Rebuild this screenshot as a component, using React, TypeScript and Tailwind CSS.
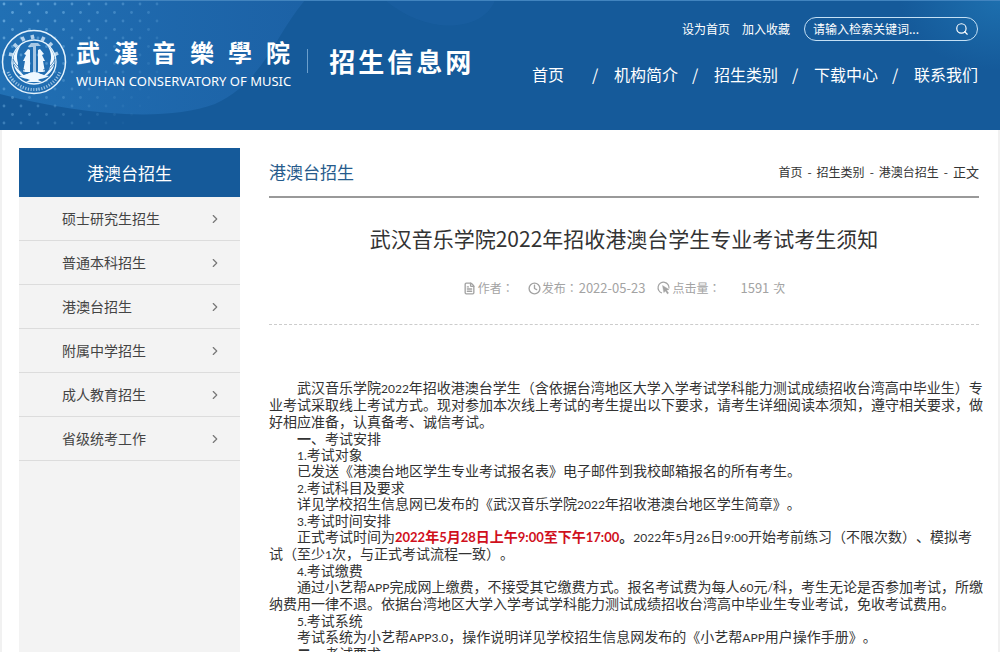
import { Fragment } from 'react';
import { ChevronRight, Clock, FileText, Search } from 'lucide-react';

const navItems = ['首页', '机构简介', '招生类别', '下载中心', '联系我们'];

const sideItems = [
  '硕士研究生招生',
  '普通本科招生',
  '港澳台招生',
  '附属中学招生',
  '成人教育招生',
  '省级统考工作',
];

// Latin letters and digits are set in a narrower face than the Chinese text
function Mixed({ children }: { children: string }) {
  return (
    <>
      {children.split(/([A-Za-z0-9.:/]+)/).map((part, i) =>
        i % 2 ? (
          <span key={i} className="font-['Lato',sans-serif] text-[12px] leading-none">
            {part}
          </span>
        ) : (
          <Fragment key={i}>{part}</Fragment>
        )
      )}
    </>
  );
}

function Heading({ children }: { children: string }) {
  return (
    <h3 className="indent-7 leading-4">
      <Mixed>{children}</Mixed>
    </h3>
  );
}

function Emblem() {
  return (
    <svg viewBox="0 0 66 66" className="h-[66px] w-[66px] shrink-0" fill="none" stroke="#e4f3fd" aria-hidden="true">
      <circle cx="33" cy="33" r="31.5" strokeWidth="1.5" />
      <path d="M7 43a28 28 0 0 0 52 0" strokeWidth="3" strokeDasharray="1.2 1.5" opacity="0.6" />
      <path d="M8 25l4 1M13 15l3 3M21 8l2 4M31 6l1 4M43 8l-2 4M51 14l-3 3M57 24l-4 2" strokeWidth="3.5" opacity="0.75" />
      <circle cx="33" cy="33" r="22" strokeWidth="1.3" />
      <g fill="#eef8ff" stroke="none">
        <path d="M20 16C8 25 10 46 27 49c-7-4-11-9-10-15-2-6-1-12 3-18Z" />
        <path d="M46 16c12 9 10 30-7 33 7-4 11-9 10-15 2-6 1-12-3-18Z" />
        <path d="M27 20l-4 5 2 1-3 6h2l-2 11h7V21Z" />
        <path d="M39 20l4 5-2 1 3 6h-2l2 11h-7V21Z" />
        <path d="M30 14h7l3 3h-5v29h-3V18h-5Z" opacity="0.65" />
        <path d="M18 47c8-1 10-4 15-4s7 3 15 4c-4 3-9 2-11 4l4 2H25l4-2c-3-2-7-1-11-4Z" />
      </g>
      <path d="M13 35c4 6 8 8 14 9M12 30c3 6 6 9 12 11M53 35c-4 6-8 8-14 9M54 30c-3 6-6 9-12 11" stroke="#286eaf" strokeWidth="0.8" />
    </svg>
  );
}

function ClickIcon() {
  return (
    <svg viewBox="0 0 14 14" className="h-[14px] w-[14px]" fill="none" stroke="currentColor" strokeWidth="1.2" aria-hidden="true">
      <path d="M5 12A5.5 5.5 0 1 1 12 7.5" />
      <path d="M5.5 4.5l6.5 4-2.4.7 2 2.9-1.2.8-1.9-2.9-1.7 1.6Z" fill="currentColor" strokeWidth="0.4" />
    </svg>
  );
}

function HeaderBackdrop() {
  return (
    <svg
      className="absolute inset-0 h-full w-full"
      viewBox="0 0 1000 130"
      preserveAspectRatio="xMinYMin slice"
      aria-hidden="true"
    >
      <defs>
        <pattern id="dots" width="17" height="17" patternUnits="userSpaceOnUse">
          <circle cx="4" cy="4" r="1.4" fill="#6fb0e2" />
          <circle cx="12.5" cy="12.5" r="1.4" fill="#6fb0e2" />
        </pattern>
        <linearGradient id="left" x1="0" x2="1" y1="0" y2="0">
          <stop offset="0" stopColor="#2170b4" />
          <stop offset="1" stopColor="#1f65ab" stopOpacity="0.7" />
        </linearGradient>
        <linearGradient id="fade" x1="0" x2="1" y1="0" y2="0.8">
          <stop offset="0" stopColor="#fff" stopOpacity="0.8" />
          <stop offset="1" stopColor="#fff" stopOpacity="0" />
        </linearGradient>
        <radialGradient id="corner" cx="1" cy="0" r="1">
          <stop offset="0" stopColor="#1d6fae" />
          <stop offset="1" stopColor="#1d6fae" stopOpacity="0" />
        </radialGradient>
        <mask id="dotsMask">
          <rect width="160" height="130" fill="url(#fade)" />
        </mask>
      </defs>
      <path d="M0 0H305C275 35 265 80 215 104C160 124 70 112 0 94Z" fill="url(#left)" />
      <path d="M385 0h110c-12 32-68 36-110 0Z" fill="#1f65a8" opacity="0.35" />
      <rect width="160" height="130" fill="url(#dots)" mask="url(#dotsMask)" />
      <rect x="900" width="100" height="70" fill="url(#corner)" />
      <rect width="1000" height="1" fill="#4184bf" />
    </svg>
  );
}

function Header() {
  return (
    <header className="relative h-[130px] shrink-0 bg-[#155a9a] text-white">
      <HeaderBackdrop />
      <div className="relative flex justify-between pr-[22px]">
        <a href="#" className="flex items-start pl-px pt-[29px]">
          <Emblem />
          <div className="ml-[9px] mt-[7px]">
            <div className="flex gap-[14px] text-[24px] font-bold leading-[32px]">
              {[...'武漢音樂學院'].map((c) => (
                <span key={c}>{c}</span>
              ))}
            </div>
            <div className="font-['Noto_Sans',sans-serif] text-[13px] leading-[26px]">
              WUHAN CONSERVATORY OF MUSIC
            </div>
          </div>
          <div className="ml-[16px] mt-[20px] h-[24px] w-px bg-[#6b9fcd]" />
          <div className="ml-[21px] mt-[14px] flex gap-[3px] text-[26px] font-bold leading-[36px]">
            {[...'招生信息网'].map((c) => (
              <span key={c}>{c}</span>
            ))}
          </div>
        </a>
        <div className="flex flex-col items-end pt-[17px]">
          <div className="flex items-center text-[12px]">
            <a href="#" className="mr-3">设为首页</a>
            <a href="#" className="mr-[14px]">加入收藏</a>
            <form className="flex h-[24px] w-[174px] items-center rounded-full border border-[#c4e0f5] pl-2 pr-2">
              <input
                type="text"
                aria-label="搜索"
                placeholder="请输入检索关键词..."
                className="min-w-0 flex-1 bg-transparent text-[12px] text-white outline-none placeholder:text-white"
              />
              <button type="submit" aria-label="搜索">
                <Search size={14} strokeWidth={2} />
              </button>
            </form>
          </div>
          <nav className="mt-[21px]">
            <ul className="flex text-[16px] leading-[24px]">
              {navItems.map((item, i) => (
                <li key={item} className="flex">
                  <a href="#" className={i === 0 ? 'mr-[14px]' : ''}>{item}</a>
                  {i < navItems.length - 1 && <span className="w-[36px] pl-[14px]">/</span>}
                </li>
              ))}
            </ul>
          </nav>
        </div>
      </div>
    </header>
  );
}

function Sidebar() {
  return (
    <aside className="w-[221px] shrink-0 bg-[#f3f3f3]">
      <h2 className="bg-[#155a9a] text-center text-[17px] leading-[49px] text-white">港澳台招生</h2>
      <ul>
        {sideItems.map((item) => (
          <li key={item} className="border-b border-[#dcdcdc]">
            <a href="#" className="flex h-[43px] items-center justify-between pl-[43px] pr-[18px] text-[14px] text-[#444]">
              {item}
              <ChevronRight size={14} strokeWidth={2} color="#777" />
            </a>
          </li>
        ))}
      </ul>
    </aside>
  );
}

export default function App() {
  return (
    <div className="flex h-screen flex-col overflow-hidden bg-white font-['Noto_Sans_CJK_SC',sans-serif] text-[#333]">
      <Header />
      <div className="flex min-h-0 flex-1 border-x-2 border-[#f1f1f1] pl-[17px] pr-[19px] pt-[18px]">
        <Sidebar />
        <main className="ml-[29px] min-w-0 flex-1">
          <div className="flex h-[50px] items-center justify-between border-b-2 border-[#999]">
            <h2 className="text-[17px] text-[#265b8c]">港澳台招生</h2>
            <div className="flex items-center gap-[5px] text-[12px]">
              <a href="#">首页</a>
              <span>-</span>
              <a href="#">招生类别</a>
              <span>-</span>
              <a href="#">港澳台招生</a>
              <span>-</span>
              <span className="text-[13px]">正文</span>
            </div>
          </div>

          <h1 className="mt-[24px] text-center text-[21px] leading-[32px]">
            武汉音乐学院2022年招收港澳台学生专业考试考生须知
          </h1>

          <div className="mt-[24px] flex h-[47px] justify-center border-b border-dashed border-[#ccc] font-['Noto_Sans_CJK_TC',sans-serif] text-[12px] leading-[20px] text-[#a3a3a3]">
            <span className="mr-[14px] flex h-[20px] items-center gap-[2px]">
              <FileText size={13} strokeWidth={2.5} />作者：
            </span>
            <span className="mr-3 flex h-[20px] items-center gap-px">
              <Clock size={13} strokeWidth={2.5} />发布：<span className="text-[13px]">2022-05-23</span>
            </span>
            <span className="flex h-[20px] items-center gap-px">
              <ClickIcon />点击量：
            </span>
            <span className="ml-5 flex h-[20px] items-center gap-1">
              <span className="text-[13px]">1591</span>次
            </span>
          </div>

          <article className="-mr-1 mt-[54px] text-[14px] leading-[17px] [text-spacing-trim:space-all]">
            <p className="indent-7">
              <Mixed>
                武汉音乐学院2022年招收港澳台学生（含依据台湾地区大学入学考试学科能力测试成绩招收台湾高中毕业生）专业考试采取线上考试方式。现对参加本次线上考试的考生提出以下要求，请考生详细阅读本须知，遵守相关要求，做好相应准备，认真备考、诚信考试。
              </Mixed>
            </p>
            <h3 className="indent-7 leading-4">
              <b>一</b>、考试安排
            </h3>
            <Heading>1.考试对象</Heading>
            <p className="indent-7">已发送《港澳台地区学生专业考试报名表》电子邮件到我校邮箱报名的所有考生。</p>
            <Heading>2.考试科目及要求</Heading>
            <p className="indent-7">
              <Mixed>详见学校招生信息网已发布的《武汉音乐学院2022年招收港澳台地区学生简章》。</Mixed>
            </p>
            <Heading>3.考试时间安排</Heading>
            <p className="indent-7">
              正式考试时间为
              <b className="text-[#d0101c] [&_span]:text-[13px]">
                <Mixed>2022年5月28日上午9:00至下午17:00</Mixed>
              </b>
              <b>。</b>
              <Mixed>2022年5月26日9:00开始考前练习（不限次数）、模拟考试（至少1次，与正式考试流程一致）。</Mixed>
            </p>
            <Heading>4.考试缴费</Heading>
            <p className="indent-7">
              <Mixed>
                通过小艺帮APP完成网上缴费，不接受其它缴费方式。报名考试费为每人60元/科，考生无论是否参加考试，所缴纳费用一律不退。依据台湾地区大学入学考试学科能力测试成绩招收台湾高中毕业生专业考试，免收考试费用。
              </Mixed>
            </p>
            <Heading>5.考试系统</Heading>
            <p className="indent-7">
              <Mixed>考试系统为小艺帮APP3.0，操作说明详见学校招生信息网发布的《小艺帮APP用户操作手册》。</Mixed>
            </p>
            <h3 className="indent-7 leading-4">
              <b>二</b>、考试要求
            </h3>
          </article>
        </main>
      </div>
    </div>
  );
}
